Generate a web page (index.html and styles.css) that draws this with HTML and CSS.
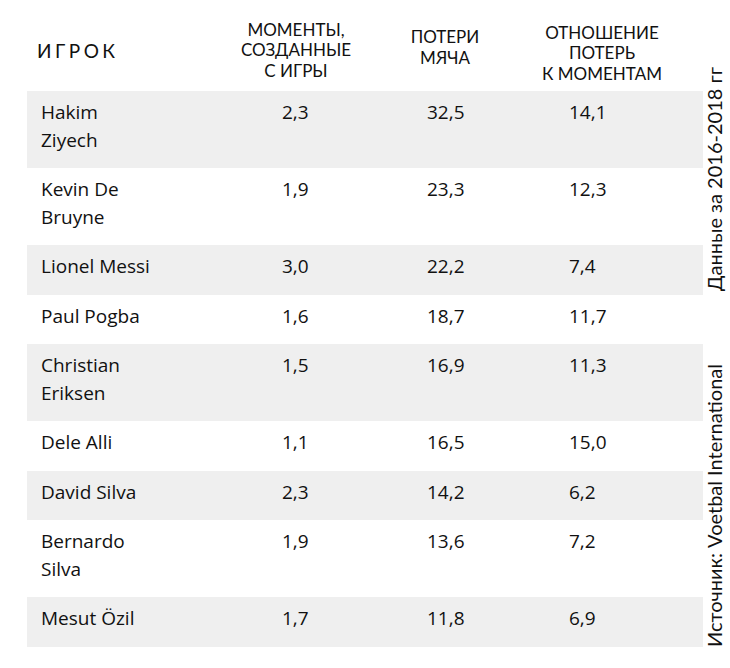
FILE: index.html
```html
<!DOCTYPE html>
<html lang="ru">
<head>
<meta charset="utf-8">
<title>Моменты и потери</title>
<link rel="stylesheet" href="styles.css">
</head>
<body>
<div class="page">
  <div class="table">
    <div class="head">
      <div class="h h-player">ИГРОК</div>
      <div class="h h-created">МОМЕНТЫ,<br>СОЗДАННЫЕ<br>С ИГРЫ</div>
      <div class="h h-loss">ПОТЕРИ<br>МЯЧА</div>
      <div class="h h-ratio">ОТНОШЕНИЕ<br>ПОТЕРЬ<br>К МОМЕНТАМ</div>
    </div>
    <div class="row alt"><div class="name">Hakim<br>Ziyech</div><div>2,3</div><div>32,5</div><div>14,1</div></div>
    <div class="row"><div class="name">Kevin De<br>Bruyne</div><div>1,9</div><div>23,3</div><div>12,3</div></div>
    <div class="row alt"><div class="name">Lionel Messi</div><div>3,0</div><div>22,2</div><div>7,4</div></div>
    <div class="row"><div class="name">Paul Pogba</div><div>1,6</div><div>18,7</div><div>11,7</div></div>
    <div class="row alt"><div class="name">Christian<br>Eriksen</div><div>1,5</div><div>16,9</div><div>11,3</div></div>
    <div class="row"><div class="name">Dele Alli</div><div>1,1</div><div>16,5</div><div>15,0</div></div>
    <div class="row alt"><div class="name">David Silva</div><div>2,3</div><div>14,2</div><div>6,2</div></div>
    <div class="row"><div class="name">Bernardo<br>Silva</div><div>1,9</div><div>13,6</div><div>7,2</div></div>
    <div class="row alt"><div class="name">Mesut Özil</div><div>1,7</div><div>11,8</div><div>6,9</div></div>
  </div>
  <div class="side">
    <div class="vt">Данные за 2016-2018 гг</div>
    <div class="vt">Источник: Voetbal International</div>
  </div>
</div>
</body>
</html>
```

FILE: styles.css
```css
html, body {
  margin: 0;
  padding: 0;
  background: #fff;
}

.page {
  display: flex;
  width: 730px;
  height: 668px;
  padding-left: 27px;
  box-sizing: border-box;
  color: #111;
}

.table {
  width: 676px;
  display: flex;
  flex-direction: column;
}

.head {
  height: 91px;
  display: grid;
  grid-template-columns: 208px 122px 176px 138px 1fr;
  font-family: Lato, "DejaVu Sans", sans-serif;
  font-size: 17px;
  line-height: 20.5px;
  text-align: center;
}

.h { white-space: nowrap; }

.h-created { padding-top: 19.9px; }
.h-loss { padding-top: 27px; }
.h-ratio { padding-top: 22.7px; }

.h-player {
  text-align: left;
  padding-left: 10px;
  padding-top: 40px;
  font-size: 19px;
  line-height: 22.8px;
  letter-spacing: 3.5px;
}

.row {
  display: grid;
  grid-template-columns: 241px 145px 142px 1fr;
  padding: 8px 0 14px 14px;
  font-family: "Open Sans", sans-serif;
  font-size: 19px;
  line-height: 27.5px;
}

.row.alt {
  background: #efefef;
}

.side {
  width: 27px;
  display: flex;
  flex-direction: column;
  justify-content: space-between;
  align-items: flex-start;
  padding: 67px 0 21px;
  box-sizing: border-box;
}

.vt {
  writing-mode: vertical-rl;
  transform: rotate(180deg);
  font-family: Lato, "DejaVu Sans", sans-serif;
  font-size: 20px;
  line-height: 22px;
  white-space: nowrap;
}
```
